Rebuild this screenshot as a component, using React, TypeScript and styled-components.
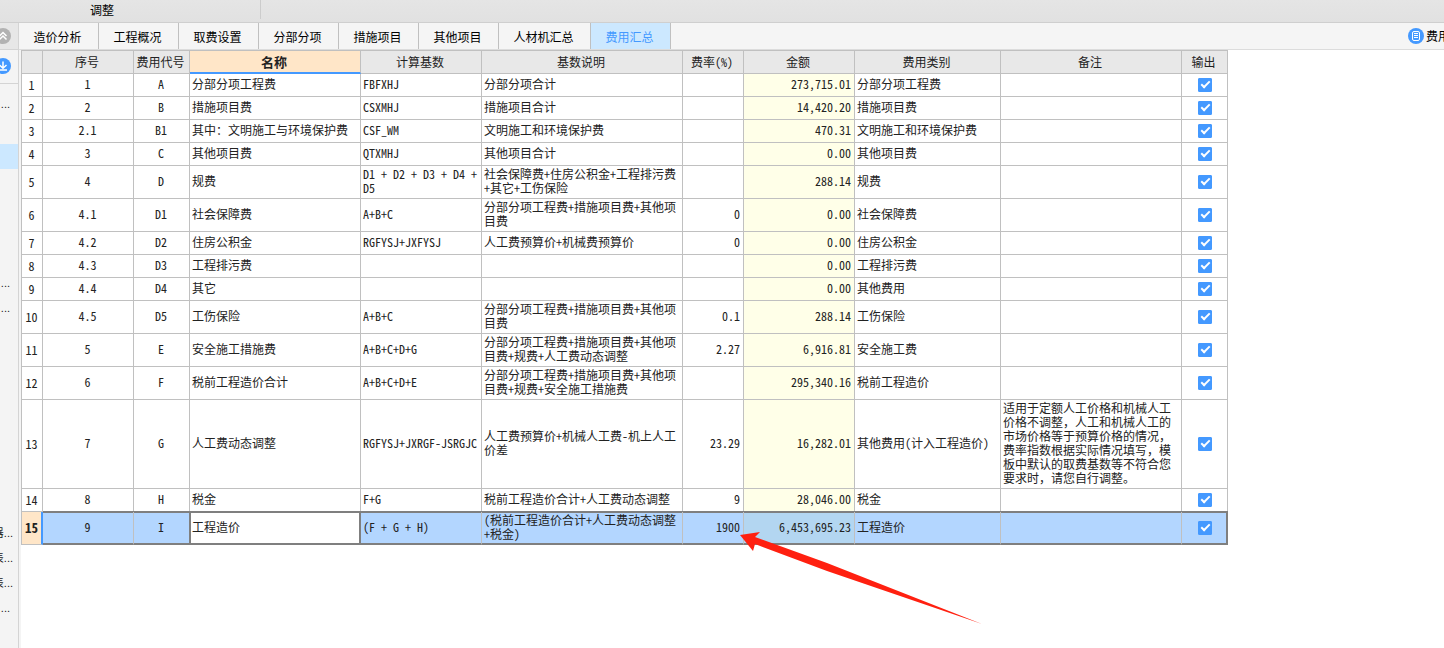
import React from 'react';
import styled, { createGlobalStyle, css } from 'styled-components';

const Global = createGlobalStyle`
  *, *::after { box-sizing: border-box; }
  body {
    margin: 0;
    background: #fff;
    color: #222;
    font: 12px/14px "Noto Sans Mono CJK SC", "Noto Sans CJK SC", monospace;
    overflow: hidden;
  }
  button { font: inherit; color: inherit; border: 0; padding: 0; background: none; }
`;

const Page = styled.div`
  display: flex;
  flex-direction: column;
  min-height: 100vh;
`;

const MenuBar = styled.header`
  display: flex;
  height: 23px;
  background: linear-gradient(#e5e5e5, #e1e1e1);
  border-bottom: 1px solid #cfcfcf;
`;

const MenuItem = styled.button`
  flex: 0 0 261px;
  height: 19px;
  padding: 1px 56px 0 0;
  border-right: 1px solid #cccccc;
  color: #000;
`;

const Body = styled.div`
  display: flex;
  flex: 1;
`;

const Sidebar = styled.aside`
  flex: 0 0 19px;
  overflow: hidden;
  background: #f4f4f4;
  border-right: 1px solid #d4d4d4;
`;

const SideTool = styled.button<{ $tall?: boolean }>`
  display: flex;
  align-items: center;
  width: 100%;
  height: ${p => (p.$tall ? 34 : 27)}px;
  padding-bottom: ${p => (p.$tall ? 2 : 0)}px;
  background: ${p => (p.$tall ? '#f4f4f4' : '#e7e7e7')};
  border-bottom: 1px solid #d4d4d4;
  overflow: hidden;

  svg { flex: none; margin-left: -5px; }
`;

const TreeHead = styled.div`
  display: flex;
  justify-content: flex-end;
  align-items: center;
  height: 35px;
  padding: 4px 8px 0 0;
  font: 11px/14px "Liberation Sans", "Noto Sans CJK SC", sans-serif;
`;

const Tree = styled.ul`
  list-style: none;
  margin: 0;
  padding: 0;
  font: 11px/14px "Liberation Sans", "Noto Sans CJK SC", sans-serif;
`;

const TreeItem = styled.li<{ $active?: boolean; $deep?: boolean }>`
  display: flex;
  justify-content: flex-end;
  align-items: center;
  height: 25px;
  padding: 3px ${p => (p.$deep ? 5 : 8)}px 0 0;
  white-space: nowrap;
  background: ${p => (p.$active ? '#cce8ff' : 'transparent')};
`;

const Main = styled.main`
  flex: 1;
  min-width: 0;
  background: #fff;
  border-left: 2px solid #f4f4f4;
`;

const TabBar = styled.nav`
  display: flex;
  height: 27px;
  margin-left: -2px;
  background: #f5f5f5;
  border-bottom: 1px solid #dcdcdc;
`;

const Tab = styled.button<{ $active?: boolean; $wide?: boolean }>`
  flex: 0 0 ${p => (p.$wide ? 92 : 80)}px;
  padding: 2px 2px 0 0;
  border-right: 1px solid #c0c0c0;
  color: ${p => (p.$active ? '#4499ff' : '#000')};
  background: ${p => (p.$active ? '#cce8ff' : 'transparent')};
`;

const TabAction = styled.button`
  display: flex;
  align-items: center;
  gap: 2px;
  width: 36px;
  margin-left: auto;
  overflow: hidden;
  white-space: nowrap;
  color: #000;

  svg { flex: none; }
`;

const Grid = styled.table`
  table-layout: fixed;
  width: 1207px;
  border-spacing: 0;
  border-top: 1px solid #c0c0c0;
  border-left: 1px solid #c0c0c0;
`;

const Th = styled.th<{ $active?: boolean }>`
  height: 23px;
  padding: 0 2px 0 0;
  font-size: ${p => (p.$active ? 13 : 12)}px;
  font-weight: ${p => (p.$active ? 700 : 400)};
  background: ${p => (p.$active ? '#ffe6c8' : '#e8e8e8')};
  border-right: 1px solid #c0c0c0;
  border-bottom: ${p => (p.$active ? '2px solid #4499ff' : '1px solid #c0c0c0')};
`;

const RowNumber = styled.th<{ $selected?: boolean }>`
  padding: 0 1px 0 0;
  font-weight: 400;
  border-right: 1px solid #c0c0c0;
  border-bottom: 1px solid #c0c0c0;
  ${p => p.$selected && css`
    padding: 0;
    font-size: 13px;
    font-weight: 700;
    background: #ffe6c8;
    border-right: 2px solid #4499ff;
  `}
`;

type Align = 'left' | 'center' | 'right';

const Td = styled.td<{ $align?: Align; $money?: boolean; $selected?: boolean; $focused?: boolean }>`
  height: 23px;
  padding: 1px 3px 3px 2px;
  text-align: ${p => p.$align ?? 'left'};
  white-space: pre;
  overflow: hidden;
  background: ${p => (p.$money ? '#ffffe8' : '#fff')};
  border-right: 1px solid #c0c0c0;
  border-bottom: 1px solid #c0c0c0;
  ${p => p.$selected && css`
    padding-bottom: 2px;
    background: ${p.$money ? '#b3d6f1' : '#b3d6ff'};
    border-bottom: 2px solid #7f7f7f;
    box-shadow: 0 -1px 0 #7f7f7f, inset 0 1px 0 #7f7f7f;
  `}
  ${p => p.$focused && css`
    background: #fff;
    border-right: 2px solid #7f7f7f;
    box-shadow: -1px 0 0 #7f7f7f, 0 -1px 0 #7f7f7f, inset 1px 1px 0 #7f7f7f;
  `}
`;

const CheckTd = styled(Td)`
  padding: 2px 0 2px 1px;
  ${p => p.$selected && css`
    padding: 2px 0 1px 2px;
    border-right: 2px solid #7f7f7f;
  `}
`;

const Check = styled.input`
  appearance: none;
  display: block;
  width: 14px;
  height: 14px;
  margin: 0 auto;
  border-radius: 1px;
  background: #fff;
  border: 1px solid #4499ff;

  &:checked {
    background: #4499ff;
  }
  &:checked::after {
    content: '';
    display: block;
    width: 9px;
    height: 5px;
    margin: 2px 0 0 2px;
    border-left: 2px solid #fff;
    border-bottom: 2px solid #fff;
    transform: rotate(-45deg);
  }
`;

const Arrow = styled.svg`
  position: absolute;
  left: 740px;
  top: 530px;
  width: 246px;
  height: 96px;
  pointer-events: none;
`;

const tabs = ['造价分析', '工程概况', '取费设置', '分部分项', '措施项目', '其他项目', '人材机汇总', '费用汇总'];

const tree = ['', '', '', '', '', '', '...', '...', '', '', '', '', '', '', '', '', '器...', '表...', '表...', '...'];

const widths = [21, 91, 56, 171, 121, 201, 61, 111, 146, 181, 46];
const heads = ['', '序号', '费用代号', '名称', '计算基数', '基数说明', '费率(%)', '金额', '费用类别', '备注', '输出'];
const aligns: Align[] = ['center', 'center', 'left', 'left', 'left', 'right', 'right', 'left', 'left'];

const note =
  '适用于定额人工价格和机械人工\n价格不调整，人工和机械人工的\n市场价格等于预算价格的情况，\n费率指数根据实际情况填写，模\n板中默认的取费基数等不符合您\n要求时，请您自行调整。';

const rows: string[][] = [
  ['1', 'A', '分部分项工程费', 'FBFXHJ', '分部分项合计', '', '273,715.01', '分部分项工程费', ''],
  ['2', 'B', '措施项目费', 'CSXMHJ', '措施项目合计', '', '14,420.20', '措施项目费', ''],
  ['2.1', 'B1', '其中：文明施工与环境保护费', 'CSF_WM', '文明施工和环境保护费', '', '470.31', '文明施工和环境保护费', ''],
  ['3', 'C', '其他项目费', 'QTXMHJ', '其他项目合计', '', '0.00', '其他项目费', ''],
  ['4', 'D', '规费', 'D1 + D2 + D3 + D4 +\nD5', '社会保障费+住房公积金+工程排污费\n+其它+工伤保险', '', '288.14', '规费', ''],
  ['4.1', 'D1', '社会保障费', 'A+B+C', '分部分项工程费+措施项目费+其他项\n目费', '0', '0.00', '社会保障费', ''],
  ['4.2', 'D2', '住房公积金', 'RGFYSJ+JXFYSJ', '人工费预算价+机械费预算价', '0', '0.00', '住房公积金', ''],
  ['4.3', 'D3', '工程排污费', '', '', '', '0.00', '工程排污费', ''],
  ['4.4', 'D4', '其它', '', '', '', '0.00', '其他费用', ''],
  ['4.5', 'D5', '工伤保险', 'A+B+C', '分部分项工程费+措施项目费+其他项\n目费', '0.1', '288.14', '工伤保险', ''],
  ['5', 'E', '安全施工措施费', 'A+B+C+D+G', '分部分项工程费+措施项目费+其他项\n目费+规费+人工费动态调整', '2.27', '6,916.81', '安全施工费', ''],
  ['6', 'F', '税前工程造价合计', 'A+B+C+D+E', '分部分项工程费+措施项目费+其他项\n目费+规费+安全施工措施费', '', '295,340.16', '税前工程造价', ''],
  ['7', 'G', '人工费动态调整', 'RGFYSJ+JXRGF-JSRGJC', '人工费预算价+机械人工费-机上人工\n价差', '23.29', '16,282.01', '其他费用(计入工程造价)', note],
  ['8', 'H', '税金', 'F+G', '税前工程造价合计+人工费动态调整', '9', '28,046.00', '税金', ''],
  ['9', 'I', '工程造价', '(F + G + H)', '(税前工程造价合计+人工费动态调整\n+税金)', '1900', '6,453,695.23', '工程造价', ''],
];

const selectedRow = 14;

export default function App() {
  return (
    <Page>
      <Global />
      <MenuBar>
        <MenuItem>调整</MenuItem>
      </MenuBar>
      <Body>
        <Sidebar>
          <SideTool aria-label="收起">
            <svg width="16" height="16" viewBox="0 0 16 16">
              <circle cx="8" cy="8" r="8" fill="#b2b2b2" />
              <path d="M4.500 8L8 4.500 11.500 8M4.500 11.500L8 8l3.500 3.500" fill="none" stroke="#fff" strokeWidth="1.500" />
            </svg>
          </SideTool>
          <SideTool $tall aria-label="导入">
            <svg width="16" height="16" viewBox="0 0 16 16">
              <circle cx="8" cy="8" r="8" fill="#4499ff" />
              <path d="M8 3.500v6.500M4.500 7L8 10.200 11.500 7M4 12h8" fill="none" stroke="#fff" strokeWidth="1.500" />
            </svg>
          </SideTool>
          <TreeHead>...</TreeHead>
          <Tree>
            {tree.map((label, i) => (
              <TreeItem key={i} $active={i === 1} $deep={label.length > 3}>{label}</TreeItem>
            ))}
          </Tree>
        </Sidebar>
        <Main>
          <TabBar>
            {tabs.map(t => (
              <Tab key={t} $wide={t.length > 4} $active={t === '费用汇总'}>{t}</Tab>
            ))}
            <TabAction>
              <svg width="16" height="16" viewBox="0 0 16 16">
                <circle cx="8" cy="8" r="8" fill="#4499ff" />
                <rect x="4.500" y="3.500" width="7" height="9" rx="1.500" fill="none" stroke="#fff" />
                <path d="M6 5.500h4M6 7.500h4M6 9.500h4" stroke="#fff" />
              </svg>
              费用汇总
            </TabAction>
          </TabBar>
          <Grid>
            <colgroup>
              {widths.map((w, i) => <col key={i} style={{ width: w }} />)}
            </colgroup>
            <thead>
              <tr>
                {heads.map((h, i) => <Th key={i} $active={h === '名称'}>{h}</Th>)}
              </tr>
            </thead>
            <tbody>
              {rows.map((row, r) => {
                const selected = r === selectedRow;
                return (
                  <tr key={r}>
                    <RowNumber scope="row" $selected={selected}>{r + 1}</RowNumber>
                    {row.map((value, c) => (
                      <Td key={c} $align={aligns[c]} $money={c === 6} $selected={selected} $focused={selected && c === 2}>
                        {value}
                      </Td>
                    ))}
                    <CheckTd $align="center" $selected={selected}>
                      <Check type="checkbox" defaultChecked aria-label={`输出 ${row[2]}`} />
                    </CheckTd>
                  </tr>
                );
              })}
            </tbody>
          </Grid>
        </Main>
      </Body>
      <Arrow viewBox="0 0 246 96">
        <path d="M0 5L20 2 15 7 87 33 242 94 87 41 15 14 13 21Z" fill="#ff2010" />
      </Arrow>
    </Page>
  );
}
